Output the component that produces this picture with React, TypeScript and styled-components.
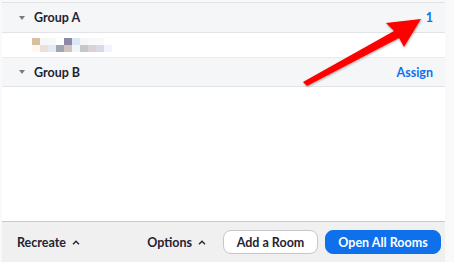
import styled, { createGlobalStyle } from "styled-components";

const GlobalStyle = createGlobalStyle`
  html, body {
    margin: 0;
    padding: 0;
    background: #f9f9fa;
  }
  body {
    font-family: Lato, "Open Sans", Arial, sans-serif;
    color: #232333;
  }
`;

const Frame = styled.div`
  position: relative;
  display: flex;
  width: 454px;
  height: 262px;
  padding: 2px 9px 0 2px;
  box-sizing: border-box;
  overflow: hidden;
`;

const Panel = styled.div`
  flex: 1;
  display: flex;
  flex-direction: column;
  background: #fff;
  border-top: 1px solid #e2e2e5;
`;

const GroupHeader = styled.div<{ $h: number }>`
  height: ${(p) => p.$h}px;
  display: flex;
  align-items: center;
  background: #f5f6f8;
  border-bottom: 1px solid #e2e3e6;
  padding: 0 12px 0 17px;
  font-size: 12.5px;
  font-weight: 700;
`;

const Caret = styled.span`
  width: 0;
  height: 0;
  border-left: 3px solid transparent;
  border-right: 3px solid transparent;
  border-top: 4px solid #7a7a80;
  margin-right: 9px;
`;

const GroupName = styled.span`
  flex: 1;
`;

const Count = styled.span`
  color: #0e71eb;
  font-weight: 700;
`;

const MemberRow = styled.div`
  height: 24px;
  display: flex;
  align-items: center;
  padding-left: 30px;
  border-bottom: 1px solid #ebebed;
`;

const Spacer = styled.div`
  flex: 1;
`;

const Footer = styled.div`
  height: 40px;
  display: flex;
  align-items: center;
  background: #f0f0f0;
  border-top: 1px solid #c9c9cc;
  padding: 0 4px 0 15px;
  font-size: 12.5px;
  font-weight: 700;
  white-space: nowrap;
`;

const MenuLabel = styled.span<{ $push?: boolean }>`
  display: inline-flex;
  align-items: center;
  gap: 6px;
  margin-left: ${(p) => (p.$push ? "auto" : "0")};
`;

const Button = styled.button<{ $primary?: boolean; $w: number }>`
  flex: 0 0 auto;
  width: ${(p) => p.$w}px;
  height: 24px;
  padding: 0;
  border-radius: 8px;
  font-family: inherit;
  font-size: 12.5px;
  font-weight: 700;
  white-space: nowrap;
  background: ${(p) => (p.$primary ? "#0e71eb" : "#fff")};
  color: ${(p) => (p.$primary ? "#fff" : "#232333")};
  border: 1px solid ${(p) => (p.$primary ? "#0e71eb" : "#c8c8cc")};
  margin-left: ${(p) => (p.$primary ? 7 : 17)}px;
`;

const Arrow = styled.svg`
  position: absolute;
  left: 0;
  top: 0;
  pointer-events: none;
`;

const mosaic: [number, number, string][] = [
  [0, 0, "#d9bf9f"], [1, 0, "#f4f6f9"], [2, 0, "#f7f8fa"], [4, 0, "#8d88a9"],
  [5, 0, "#dce9f4"], [6, 0, "#f6f6f8"], [7, 0, "#f8f8fa"], [8, 0, "#fafafc"],
  [0, 1, "#fcf8f4"], [1, 1, "#ebe1d8"], [2, 1, "#e0ebf4"], [3, 1, "#a2a6ab"],
  [4, 1, "#cfc4c1"], [5, 1, "#f2f5f8"], [6, 1, "#c5c7cb"], [7, 1, "#dbcfd8"],
  [8, 1, "#dbd9e5"], [9, 1, "#f0f5fa"],
];

function Pixelated() {
  return (
    <svg width={82} height={14} viewBox="0 0 82 14">
      {mosaic.map(([x, y, c], i) => (
        <rect key={i} x={x * 8} y={y * 7} width={8} height={7} fill={c} />
      ))}
    </svg>
  );
}

function ChevronUp() {
  return (
    <svg width={8} height={5} viewBox="0 0 8 5">
      <path d="M1 4.2 L4 1.2 L7 4.2" fill="none" stroke="#232333" strokeWidth={1.4} />
    </svg>
  );
}

export default function App() {
  return (
    <>
      <GlobalStyle />
      <Frame>
        <Panel>
          <GroupHeader $h={29}>
            <Caret />
            <GroupName>Group A</GroupName>
            <Count>1</Count>
          </GroupHeader>
          <MemberRow>
            <Pixelated />
          </MemberRow>
          <GroupHeader $h={28}>
            <Caret />
            <GroupName>Group B</GroupName>
            <Count>Assign</Count>
          </GroupHeader>
          <Spacer />
          <Footer>
            <MenuLabel>
              Recreate <ChevronUp />
            </MenuLabel>
            <MenuLabel $push>
              Options <ChevronUp />
            </MenuLabel>
            <Button $w={95}>Add a Room</Button>
            <Button $primary $w={116}>Open All Rooms</Button>
          </Footer>
        </Panel>
        <Arrow width={454} height={262}>
          <defs>
            <filter id="sh" x="-20%" y="-20%" width="140%" height="140%">
              <feDropShadow dx="0.5" dy="1" stdDeviation="1" floodColor="#000" floodOpacity="0.35" />
            </filter>
          </defs>
          <polygon
            points="421,19 386,23 394,31 303,82 307,86 399,38 404,47"
            fill="#ff0000"
            filter="url(#sh)"
          />
        </Arrow>
      </Frame>
    </>
  );
}
